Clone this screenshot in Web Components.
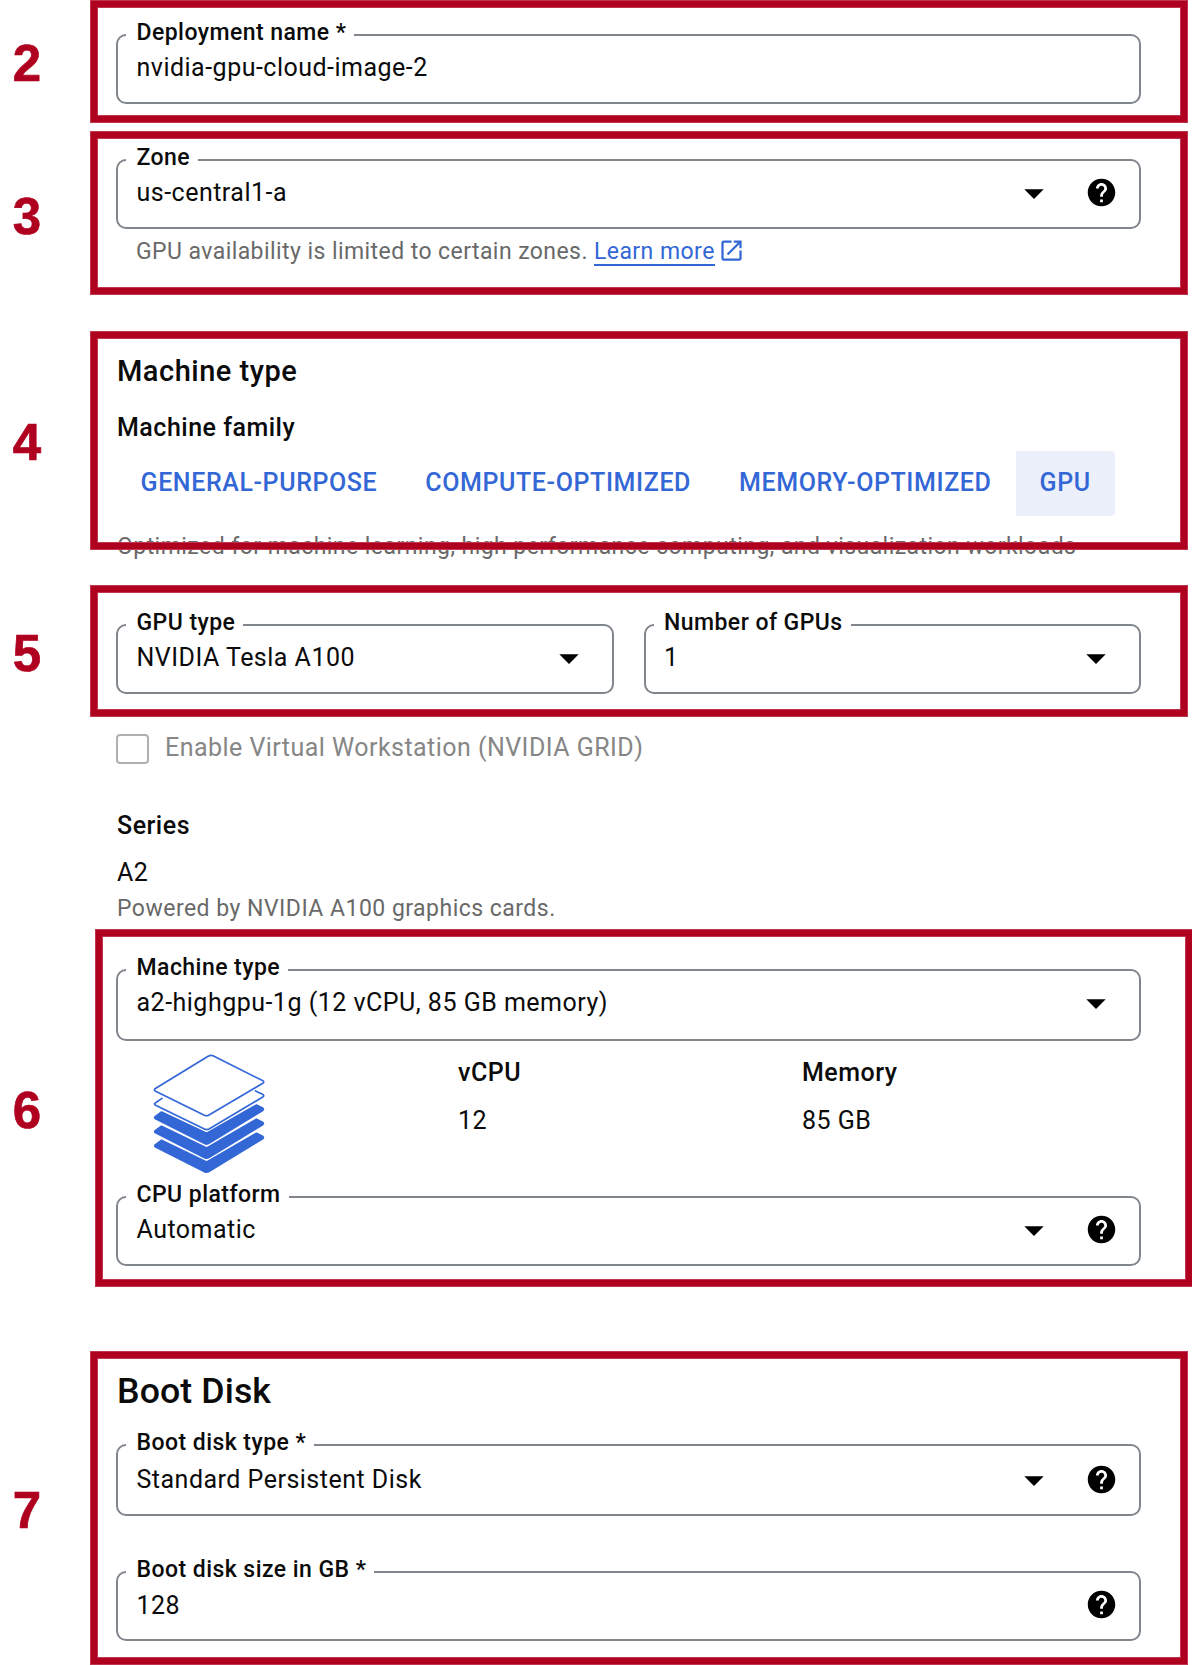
<!DOCTYPE html>
<html lang="en">
<head>
<meta charset="utf-8">
<title>Deployment configuration</title>
<style>
  html, body { margin: 0; background: #fff; }
  body { width: 1192px; height: 1665px; overflow: hidden; font-family: Roboto, sans-serif; color: #0b0b0b; }
</style>
</head>
<body>
<deploy-page></deploy-page>

<script>
const define = (name, html, setup) => {
  const tpl = document.createElement('template');
  tpl.innerHTML = html;
  customElements.define(name, class extends HTMLElement {
    constructor() {
      super();
      this.attachShadow({ mode: 'open' }).append(tpl.content.cloneNode(true));
    }
    connectedCallback() { if (setup) setup(this, this.shadowRoot); }
  });
};

/* Numbered step: red digit on the left, red frame round the slotted content */
define('step-callout', `
<style>
  :host { display: flex; align-items: center; height: var(--h); margin-top: var(--gap, 0); }
  .num { flex: none; width: 54px; margin-right: 36px; text-align: center; color: #b00020;
         font: bold 51px/52px "Liberation Sans", Arial, sans-serif; padding-top: var(--drop, 5px);
         -webkit-text-stroke: .7px #b00020; }
  .box { position: relative; box-sizing: border-box; flex: none; width: 1098px; height: 100%;
         margin-left: var(--shift, 0px); display: flex; flex-direction: column;
         padding: calc(8px + var(--pt)) calc(47px + var(--shift, 0px)) 0 calc(26px - var(--shift, 0px)); }
  .box::after { content: ""; position: absolute; inset: 0; pointer-events: none;
         box-shadow: inset 0 0 0 1px #c0364f, inset 0 0 0 7px #b00020, inset 0 0 0 8px #c0364f; }
</style>
<div class="num"></div><div class="box"><slot></slot></div>`,
(el, root) => { root.querySelector('.num').textContent = el.getAttribute('number'); });

define('help-icon', `
<style>:host { display: block; width: 33px; height: 33px; margin-top: -2px; } svg { display: block; }</style>
<svg width="33" height="33" viewBox="0 0 24 24"><path fill="#000" d="M12 2C6.48 2 2 6.48 2 12s4.48 10 10 10 10-4.48 10-10S17.52 2 12 2zm1 17h-2v-2h2v2zm2.07-7.75-.9.92C13.45 12.9 13 13.5 13 15h-2v-.5c0-1.1.45-2.1 1.17-2.83l1.24-1.26c.37-.36.59-.86.59-1.41 0-1.1-.9-2-2-2s-2 .9-2 2H8c0-2.21 1.79-4 4-4s4 1.79 4 4c0 .88-.36 1.68-.93 2.25z"/></svg>`);

/* Outlined field with a floating label; attributes: label, select, help */
define('outlined-field', `
<style>
  :host { display: flex; flex-direction: column; align-items: flex-start; box-sizing: border-box;
          height: 70px; border: 2px solid #80868b; border-radius: 10px; }
  .label { margin: -15px 0 0 8px; padding: 0 8px 0 10.5px; background: #fff; white-space: nowrap;
           font-weight: 500; font-size: 23px; line-height: 24px; letter-spacing: .45px; }
  .row { align-self: stretch; display: flex; align-items: center; height: 30px;
         margin-top: calc(8px + var(--nudge, 0px)); padding: 0 33px 0 18.5px; }
  :host([help]) .row { padding-right: 21px; }
  .value { flex: 1; white-space: nowrap; font-size: 25px; line-height: 30px; letter-spacing: .49px; }
  .arrow { display: none; margin-top: 1px; }
  :host([select]) .arrow { display: block; }
  help-icon { display: none; margin-left: 41px; }
  :host([help]) help-icon { display: block; }
</style>
<div class="label"></div>
<div class="row"><div class="value"><slot></slot></div>
<svg class="arrow" width="20" height="10" viewBox="0 0 20 10"><path d="M.3.2h19.4L10 9.9z" fill="#000"/></svg>
<help-icon></help-icon></div>`,
(el, root) => { root.querySelector('.label').textContent = el.getAttribute('label'); });

define('helper-link', `
<style>
  :host { display: inline-flex; align-items: flex-start; color: #3367d6; }
  span { height: 26px; border-bottom: 2px solid #3367d6; letter-spacing: .45px; }
  svg { display: block; margin: -1px 0 0 3px; }
</style>
<span><slot></slot></span>
<svg width="27" height="27" viewBox="0 0 24 24"><path fill="#3367d6" d="M19 19H5V5h7V3H5c-1.11 0-2 .9-2 2v14c0 1.1.89 2 2 2h14c1.1 0 2-.9 2-2v-7h-2v7zM14 3v2h3.59l-9.83 9.83 1.41 1.41L19 6.41V10h2V3h-7z"/></svg>`);

define('family-tab', `
<style>
  :host { display: flex; align-items: center; box-sizing: border-box; height: 65px; padding: 0 24px 2px;
          font-weight: 500; font-size: 25px; letter-spacing: .6px; color: #3367d6; white-space: nowrap; }
  :host([selected]) { background: #ebf0fa; border-radius: 0 4px 4px 0; }
</style><slot></slot>`);

define('check-row', `
<style>
  :host { display: flex; gap: 16px; height: 30px; color: #868686; font-size: 25px; line-height: 30px; letter-spacing: .46px; }
  i { box-sizing: border-box; width: 33px; height: 30px; border: 2px solid #b0b0b0; border-radius: 4px; }
  span { margin-top: -1px; }
</style><i></i><span><slot></slot></span>`);

define('stack-picture', `
<style>:host { display: block; width: 112px; height: 120px; } svg { display: block; }</style>
<svg width="112" height="120" viewBox="0 0 112 120" stroke-linejoin="round" stroke-linecap="round">
  <g fill="none" stroke="#3367d6" stroke-width="1.7">
    <path d="M55.5 2.1Q57.7.6 60 1.8L109.5 26.6Q111.8 27.8 109.8 29.3L56 61Q53.7 62.4 51.4 61.2L2.6 37.3Q.3 36 2.4 34.5z"/>
    <path d="M9 44.4L2.6 48.7Q.3 50 2.6 51.3L51.4 75Q53.7 76.2 56 75L109.8 43Q111.8 41.6 109.5 40.3L102.5 36.9"/>
  </g>
  <g fill="#3367d6" stroke="#3367d6" stroke-width="1.6">
    <path d="M8.5 58L2.5 62.4Q.8 63.6 2.6 64.8L51.6 89.6Q53.7 90.7 55.9 89.4L109.6 56.6Q111.4 55.3 109.5 54L103.5 51L53.7 79.2z"/>
    <path d="M8.5 72.1L2.5 76.5Q.8 77.7 2.6 78.9L51.6 103.7Q53.7 104.8 55.9 103.5L109.6 70.7Q111.4 69.4 109.5 68.1L103.5 65.1L53.7 94z"/>
    <path d="M8.5 86.2L2.5 90.6Q.8 91.8 2.6 93L51.6 117.8Q53.7 118.9 55.9 117.6L109.6 84.8Q111.4 83.5 109.5 82.2L103.5 79.2L53.7 108z"/>
  </g>
</svg>`);

define('spec-item', `
<style>
  :host { display: flex; flex-direction: column; gap: 18px; padding-top: 4px; font-size: 25px; line-height: 30px; letter-spacing: .5px; }
  b { font-weight: 500; }
</style><b></b><span><slot></slot></span>`,
(el, root) => { root.querySelector('b').textContent = el.getAttribute('label'); });

define('deploy-page', `
<style>
  :host { display: flex; flex-direction: column; width: 1192px; height: 1665px; overflow: hidden; }
  h2, h3, p { margin: 0; font-weight: 500; white-space: nowrap; }
  h2 { font-size: 29px; line-height: 34px; letter-spacing: .5px; padding-left: 1px; }
  h2.big { font-size: 35.7px; line-height: 42px; letter-spacing: .1px; }
  h3 { font-size: 25px; line-height: 30px; letter-spacing: .5px; padding-left: 1px; }
  p { font-weight: 400; font-size: 23px; line-height: 28px; letter-spacing: .45px; color: #696969; }
  .note { padding-left: 1px; }
  .helper { display: flex; gap: 6px; margin: 9px 0 0 20px; }
  .helper p:first-child { letter-spacing: .43px; }
  .tabs { display: flex; margin-top: 8px; padding-left: .5px; }
  .pair { display: flex; gap: 30px; }
  .pair > * { flex: 1; }
  .series { display: flex; flex-direction: column; padding: 17px 0 0 116px; }
  .a2 { font-size: 25px; line-height: 30px; letter-spacing: .5px; padding-left: 1px; }
  .specs { display: grid; grid-template-columns: 342px 344px 1fr; box-sizing: border-box; height: 155px; padding-top: 13px; }
</style>
<step-callout number="2" style="--h:123px;--pt:26px">
  <outlined-field label="Deployment name *">nvidia-gpu-cloud-image-2</outlined-field>
</step-callout>
<step-callout number="3" style="--h:164px;--gap:8px;--pt:20px;--drop:7px">
  <outlined-field label="Zone" select help>us-central1-a</outlined-field>
  <div class="helper"><p>GPU availability is limited to certain zones.</p><p><helper-link>Learn more</helper-link></p></div>
</step-callout>
<step-callout number="4" style="--h:219px;--gap:36px;--pt:15px">
  <h2>Machine type</h2>
  <h3 style="margin-top:25px">Machine family</h3>
  <div class="tabs">
    <family-tab>GENERAL-PURPOSE</family-tab><family-tab>COMPUTE-OPTIMIZED</family-tab><family-tab>MEMORY-OPTIMIZED</family-tab><family-tab selected>GPU</family-tab>
  </div>
  <p class="note" style="margin-top:17px">Optimized for machine learning, high performance computing, and visualization workloads</p>
</step-callout>
<step-callout number="5" style="--h:132px;--gap:35px;--pt:31px">
  <div class="pair">
    <outlined-field label="GPU type" select>NVIDIA Tesla A100</outlined-field>
    <outlined-field label="Number of GPUs" select>1</outlined-field>
  </div>
</step-callout>
<div class="series">
  <check-row>Enable Virtual Workstation (NVIDIA GRID)</check-row>
  <h3 style="margin-top:47px">Series</h3>
  <div class="a2" style="margin-top:17px">A2</div>
  <p class="note" style="margin-top:7px;letter-spacing:.48px">Powered by NVIDIA A100 graphics cards.</p>
</div>
<step-callout number="6" style="--h:358px;--gap:6px;--pt:32px;--shift:5px">
  <outlined-field label="Machine type" select style="height:72px">a2-highgpu-1g (12 vCPU, 85 GB memory)</outlined-field>
  <div class="specs">
    <stack-picture style="margin-left:37px"></stack-picture>
    <spec-item label="vCPU">12</spec-item>
    <spec-item label="Memory">85 GB</spec-item>
  </div>
  <outlined-field label="CPU platform" select help>Automatic</outlined-field>
</step-callout>
<step-callout number="7" style="--h:314px;--gap:64px;--pt:11px;--drop:6px">
  <h2 class="big">Boot Disk</h2>
  <outlined-field label="Boot disk type *" select help style="height:72px;margin-top:32px;--nudge:2px">Standard Persistent Disk</outlined-field>
  <outlined-field label="Boot disk size in GB *" help style="margin-top:55px;--nudge:.5px">128</outlined-field>
</step-callout>`);
</script>
</body>
</html>
